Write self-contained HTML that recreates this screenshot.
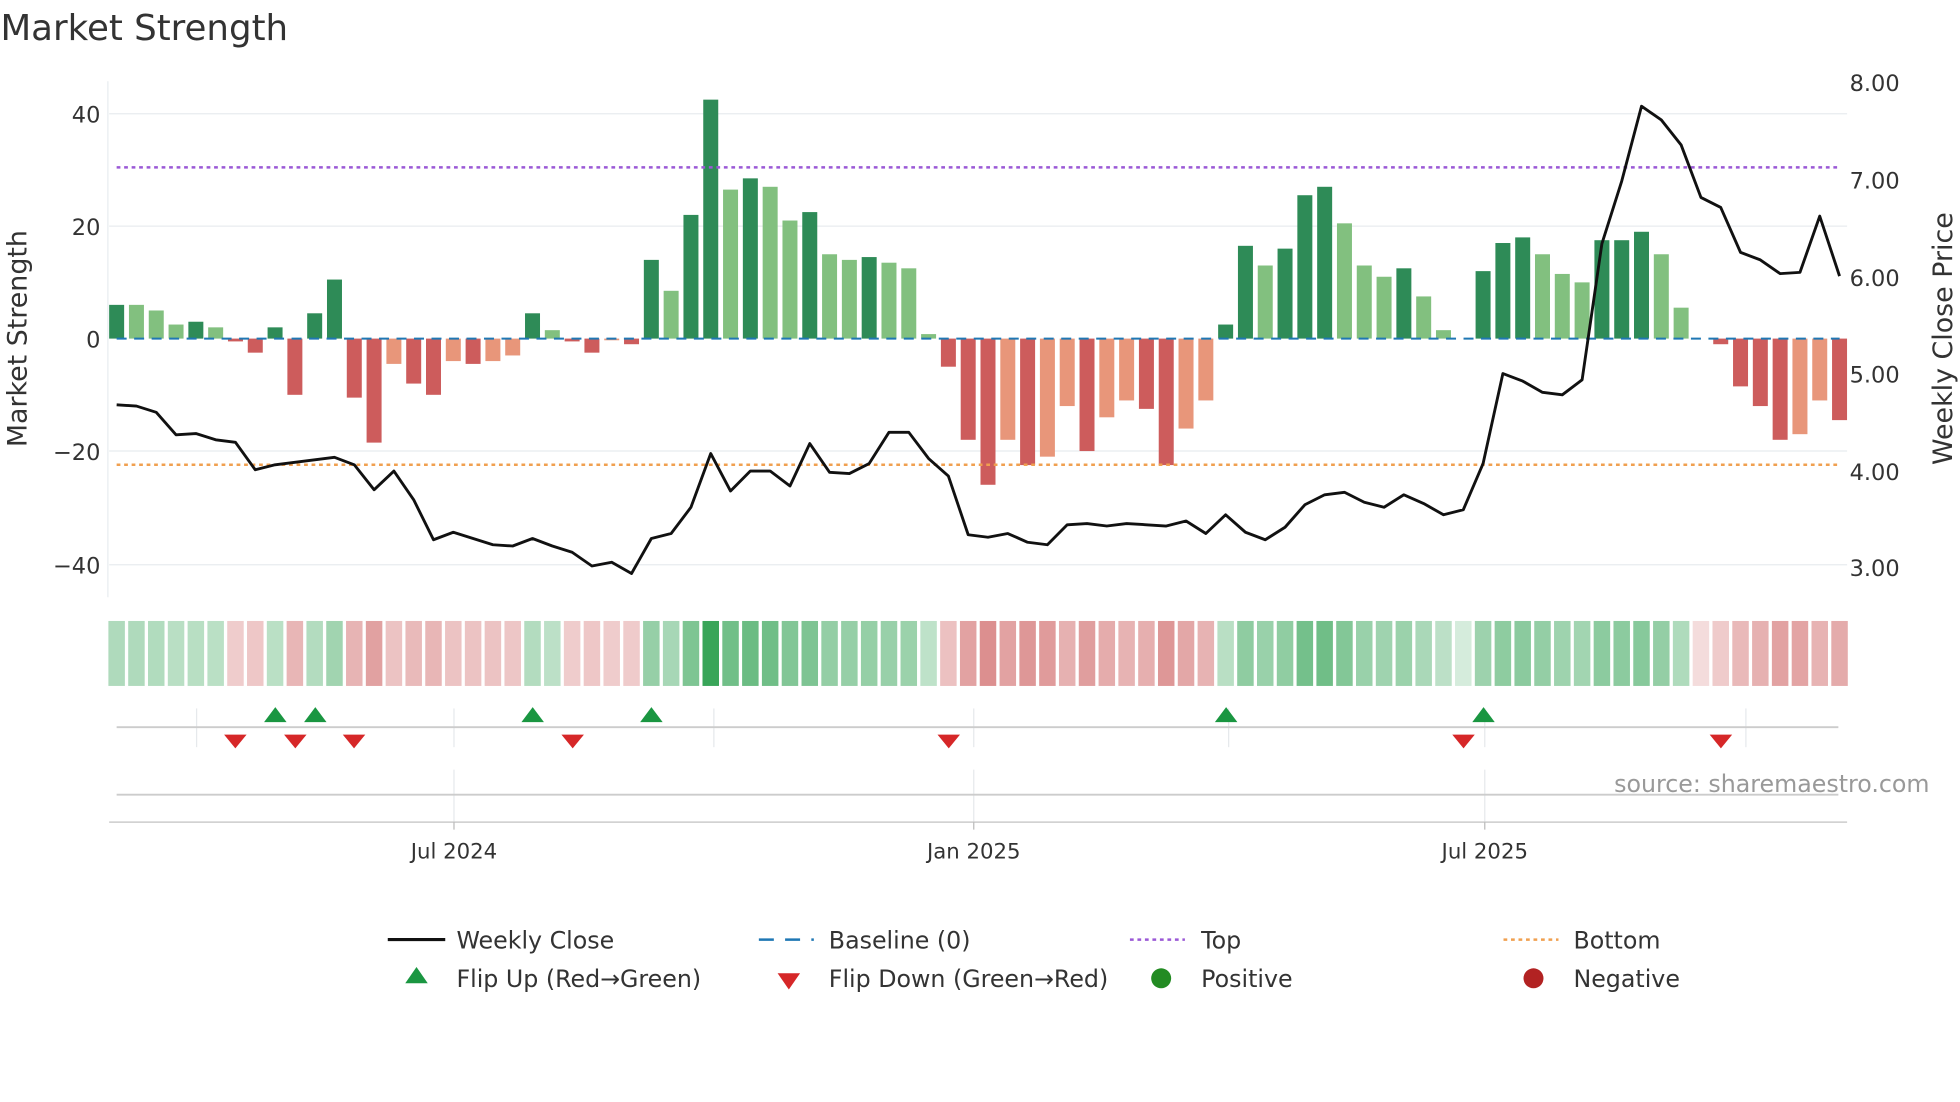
<!DOCTYPE html>
<html><head><meta charset="utf-8"><style>
html,body{margin:0;padding:0;background:#fff;width:1960px;height:1102px;overflow:hidden}
svg{display:block}
text{font-family:"DejaVu Sans","Liberation Sans",sans-serif;fill:#333}
</style></head><body>
<svg id="s" width="1960" height="1102" viewBox="0 0 1568 882" xmlns="http://www.w3.org/2000/svg">
<text x="0" y="32" font-size="28.5">Market Strength</text>
<g stroke="#e8ecef" stroke-width="1">
<line x1="87" y1="91" x2="1478" y2="91"/><line x1="87" y1="181" x2="1478" y2="181"/>
<line x1="87" y1="361" x2="1478" y2="361"/><line x1="87" y1="452" x2="1478" y2="452"/>
<line x1="86" y1="65" x2="86" y2="478"/>
</g>
<g font-size="18" text-anchor="end">
<text x="80" y="98">40</text><text x="80" y="188">20</text><text x="80" y="278">0</text>
<text x="80" y="368">−20</text><text x="80" y="459">−40</text>
</g>
<g font-size="18">
<text x="1480" y="73">8.00</text><text x="1480" y="151">7.00</text><text x="1480" y="229">6.00</text>
<text x="1480" y="306">5.00</text><text x="1480" y="384">4.00</text><text x="1480" y="461">3.00</text>
</g>
<text transform="translate(21,271) rotate(-90)" font-size="21.5" text-anchor="middle">Market Strength</text>
<text transform="translate(1562,271) rotate(-90)" font-size="21.5" text-anchor="middle">Weekly Close Price</text>
<g id="bars"></g>
<line x1="93" y1="271" x2="1472" y2="271" stroke="#1f77b4" stroke-width="1.6" stroke-dasharray="8,6"/>
<line x1="93" y1="134" x2="1472" y2="134" stroke="#9b59d6" stroke-width="2" stroke-dasharray="3,3"/>
<line x1="93" y1="372" x2="1472" y2="372" stroke="#f0a050" stroke-width="2" stroke-dasharray="3,3"/>
<polyline id="pl" fill="none" stroke="#111" stroke-width="2.3" stroke-linejoin="round"/>
<g id="heat"></g>
<g stroke="#e6e9ec" stroke-width="1">
<line x1="157" y1="567" x2="157" y2="598"/><line x1="363" y1="567" x2="363" y2="598"/><line x1="571" y1="567" x2="571" y2="598"/>
<line x1="779" y1="567" x2="779" y2="598"/><line x1="983" y1="567" x2="983" y2="598"/><line x1="1188" y1="567" x2="1188" y2="598"/><line x1="1397" y1="567" x2="1397" y2="598"/>
<line x1="363" y1="616" x2="363" y2="658"/><line x1="779" y1="616" x2="779" y2="658"/><line x1="1188" y1="616" x2="1188" y2="658"/>
</g>
<line x1="93" y1="582" x2="1471" y2="582" stroke="#ccc" stroke-width="1.5"/>
<line x1="93" y1="636" x2="1471" y2="636" stroke="#ccc" stroke-width="1.5"/>
<line x1="87" y1="658" x2="1478" y2="658" stroke="#ccc" stroke-width="1.2"/>
<g stroke="#bbb"><line x1="363" y1="658" x2="363" y2="664"/><line x1="779" y1="658" x2="779" y2="664"/><line x1="1188" y1="658" x2="1188" y2="664"/></g>
<g id="tri"></g>
<text x="1544" y="634" font-size="19" text-anchor="end" style="fill:#999">source: sharemaestro.com</text>
<g font-size="17" text-anchor="middle">
<text x="363" y="687">Jul 2024</text><text x="779" y="687">Jan 2025</text><text x="1188" y="687">Jul 2025</text>
</g>
<g font-size="19">
<line x1="310" y1="752" x2="356" y2="752" stroke="#111" stroke-width="2.5"/><text x="365" y="759">Weekly Close</text>
<line x1="607" y1="752" x2="651" y2="752" stroke="#1f77b4" stroke-width="2" stroke-dasharray="12,9"/><text x="663" y="759">Baseline (0)</text>
<line x1="904" y1="752" x2="948" y2="752" stroke="#9b59d6" stroke-width="2" stroke-dasharray="3,3"/><text x="961" y="759">Top</text>
<line x1="1203" y1="752" x2="1247" y2="752" stroke="#f0a050" stroke-width="2" stroke-dasharray="3,3"/><text x="1259" y="759">Bottom</text>
<polygon points="333,774 342,787 324,787" fill="#1a9641"/><text x="365" y="790">Flip Up (Red→Green)</text>
<polygon points="622,779 640,779 631,792" fill="#d62728"/><text x="663" y="790">Flip Down (Green→Red)</text>
<circle cx="929" cy="783" r="8" fill="#228b22"/><text x="961" y="790">Positive</text>
<circle cx="1227" cy="783" r="8" fill="#b22222"/><text x="1259" y="790">Negative</text>
</g>
</svg>
<script>
var v=[6,6,5,2.5,3,2,-0.5,-2.5,2,-10,4.5,10.5,-10.5,-18.5,-4.5,-8,-10,-4,-4.5,-4,-3,4.5,1.5,-0.5,-2.5,-0.3,-1,14,8.5,22,42.5,26.5,28.5,27,21,22.5,15,14,14.5,13.5,12.5,0.8,-5,-18,-26,-18,-22.5,-21,-12,-20,-14,-11,-12.5,-22.5,-16,-11,2.5,16.5,13,16,25.5,27,20.5,13,11,12.5,7.5,1.5,0,12,17,18,15,11.5,10,17.5,17.5,19,15,5.5,0,-1,-8.5,-12,-18,-17,-11,-14.5];
var dark={0:1,4:1,8:1,10:1,11:1,21:1,27:1,29:1,30:1,32:1,35:1,38:1,56:1,57:1,59:1,60:1,61:1,65:1,69:1,70:1,71:1,75:1,76:1,77:1};
var sal={14:1,17:1,19:1,20:1,25:1,45:1,47:1,48:1,50:1,51:1,54:1,55:1,85:1,86:1};
var p=[324,325,330,348,347,352,354,376,372,370,368,366,372,392,377,400,432,426,431,436,437,431,437,442,453,450,459,431,427,406,363,393,377,377,389,355,378,379,371,346,346,367,381,428,430,427,434,436,420,419,421,419,420,421,417,427,412,426,432,422,404,396,394,402,406,396,403,412,408,371,299,305,314,316,304,195,145,85,96,116,158,166,202,208,219,218,173,221];
var b='',h='',pts=[];
for(var i=0;i<88;i++){var cx=93+i*15.85,val=v[i],y=271-val*4.5;
 var c=val>=0?(dark[i]?'#2e8b57':'#82c07f'):(sal[i]?'#e8967a':'#cd5c5c');
 if(val!=0)b+='<rect x="'+(cx-6)+'" y="'+Math.min(y,271)+'" width="12" height="'+Math.abs(val*4.5)+'" fill="'+c+'"/>';
 var a=0.3+0.6*Math.min(Math.abs(val),42)/42;
 var hc=val>0||(val==0&&i==68)?'rgba(46,160,80,'+(val>40?0.95:a)+')':'rgba(200,80,80,'+(a*0.95)+')';
 if(val==0&&i==68)hc='rgba(46,160,80,0.2)';if(val==0&&i==80)hc='rgba(200,80,80,0.2)';
 h+='<rect x="'+(cx-6.6)+'" y="497" width="13.2" height="52" fill="'+hc+'"/>';
 pts.push(cx+','+p[i]);}
document.getElementById('bars').innerHTML=b;
document.getElementById('heat').innerHTML=h;
document.getElementById('pl').setAttribute('points',pts.join(' '));
var t='',up=[220,252,426,521,981,1187],dn=[188,236,283,458,759,1171,1377];
up.forEach(function(x){t+='<polygon points="'+x+',566 '+(x+9)+',578 '+(x-9)+',578" fill="#1a9641"/>';});
dn.forEach(function(x){t+='<polygon points="'+(x-9)+',588 '+(x+9)+',588 '+x+',599" fill="#d62728"/>';});
document.getElementById('tri').innerHTML=t;
</script>
</body></html>
